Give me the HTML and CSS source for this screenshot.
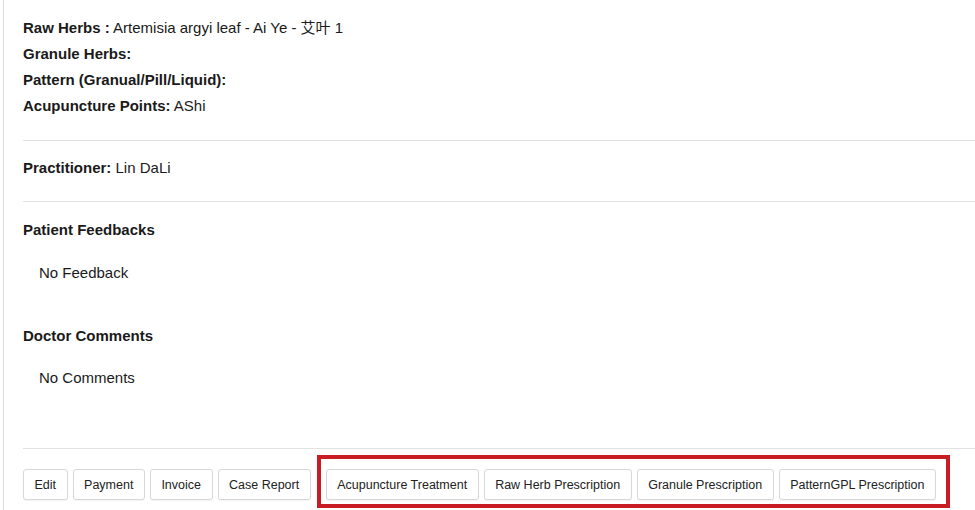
FILE: index.html
```html
<!DOCTYPE html>
<html lang="en">
<head>
<meta charset="utf-8">
<title>Visit detail</title>
<link rel="stylesheet" href="styles.css">
</head>
<body>
<div class="panel">
  <div class="herbs">
    <div class="row"><b>Raw Herbs :</b> Artemisia argyi leaf - Ai Ye - 艾叶 1</div>
    <div class="row"><b>Granule Herbs:</b></div>
    <div class="row"><b>Pattern (Granual/Pill/Liquid):</b></div>
    <div class="row"><b>Acupuncture Points:</b> AShi</div>
  </div>
  <hr class="rule rule-1">
  <div class="row practitioner"><b>Practitioner:</b> Lin DaLi</div>
  <hr class="rule rule-2">
  <div class="row heading feedback-h">Patient Feedbacks</div>
  <div class="row note feedback-n">No Feedback</div>
  <div class="row heading comments-h">Doctor Comments</div>
  <div class="row note comments-n">No Comments</div>
  <hr class="rule rule-3">
  <div class="actions">
    <button class="btn">Edit</button>
    <button class="btn">Payment</button>
    <button class="btn">Invoice</button>
    <button class="btn">Case Report</button>
    <div class="group highlighted">
      <button class="btn">Acupuncture Treatment</button>
      <button class="btn">Raw Herb Prescription</button>
      <button class="btn">Granule Prescription</button>
      <button class="btn">PatternGPL Prescription</button>
    </div>
  </div>
</div>
</body>
</html>
```
FILE: styles.css
```css
html, body {
  margin: 0;
  padding: 0;
  background: #ffffff;
}

body {
  font-family: "Liberation Sans", Arial, "Noto Sans CJK SC", sans-serif;
  font-size: 15px;
  color: #1a1a1a;
  height: 510px;
  overflow: hidden;
}

.panel {
  margin-left: 3px;
  border-left: 1px solid #dcdcdc;
  padding-left: 19px;
  padding-top: 15px;
  min-height: 510px;
  box-sizing: border-box;
}

.row {
  line-height: 26px;
  height: 26px;
  white-space: nowrap;
}

.row b,
.heading {
  font-weight: bold;
}

.rule {
  border: 0;
  border-top: 1px solid #e2e2e2;
  height: 0;
  margin: 0;
}

.rule-1 { margin-top: 21px; }
.practitioner { margin-top: 14px; }
.rule-2 { margin-top: 20px; }
.feedback-h { margin-top: 15px; }
.note { padding-left: 16px; }
.feedback-n { margin-top: 17px; }
.comments-h { margin-top: 37px; }
.comments-n { margin-top: 16px; }
.rule-3 { margin-top: 57px; }

.actions {
  display: flex;
  align-items: center;
  gap: 5px;
  margin-top: 20px;
}

.group {
  display: flex;
  gap: 5px;
  margin-left: 10px;
}

.highlighted {
  position: relative;
}

.highlighted::after {
  content: "";
  position: absolute;
  top: -14px;
  bottom: -8px;
  left: -9px;
  right: -14px;
  border: 4px solid #c91c25;
  pointer-events: none;
}

.btn {
  font-family: "Liberation Sans", Arial, sans-serif;
  font-size: 12.5px;
  color: #222;
  background: #ffffff;
  border: 1px solid #d6d9dc;
  border-radius: 3px;
  height: 31px;
  padding: 0 10.5px;
  box-sizing: border-box;
  box-shadow: 0 1px 1px rgba(0, 0, 0, 0.05);
  white-space: nowrap;
  cursor: pointer;
}
```
